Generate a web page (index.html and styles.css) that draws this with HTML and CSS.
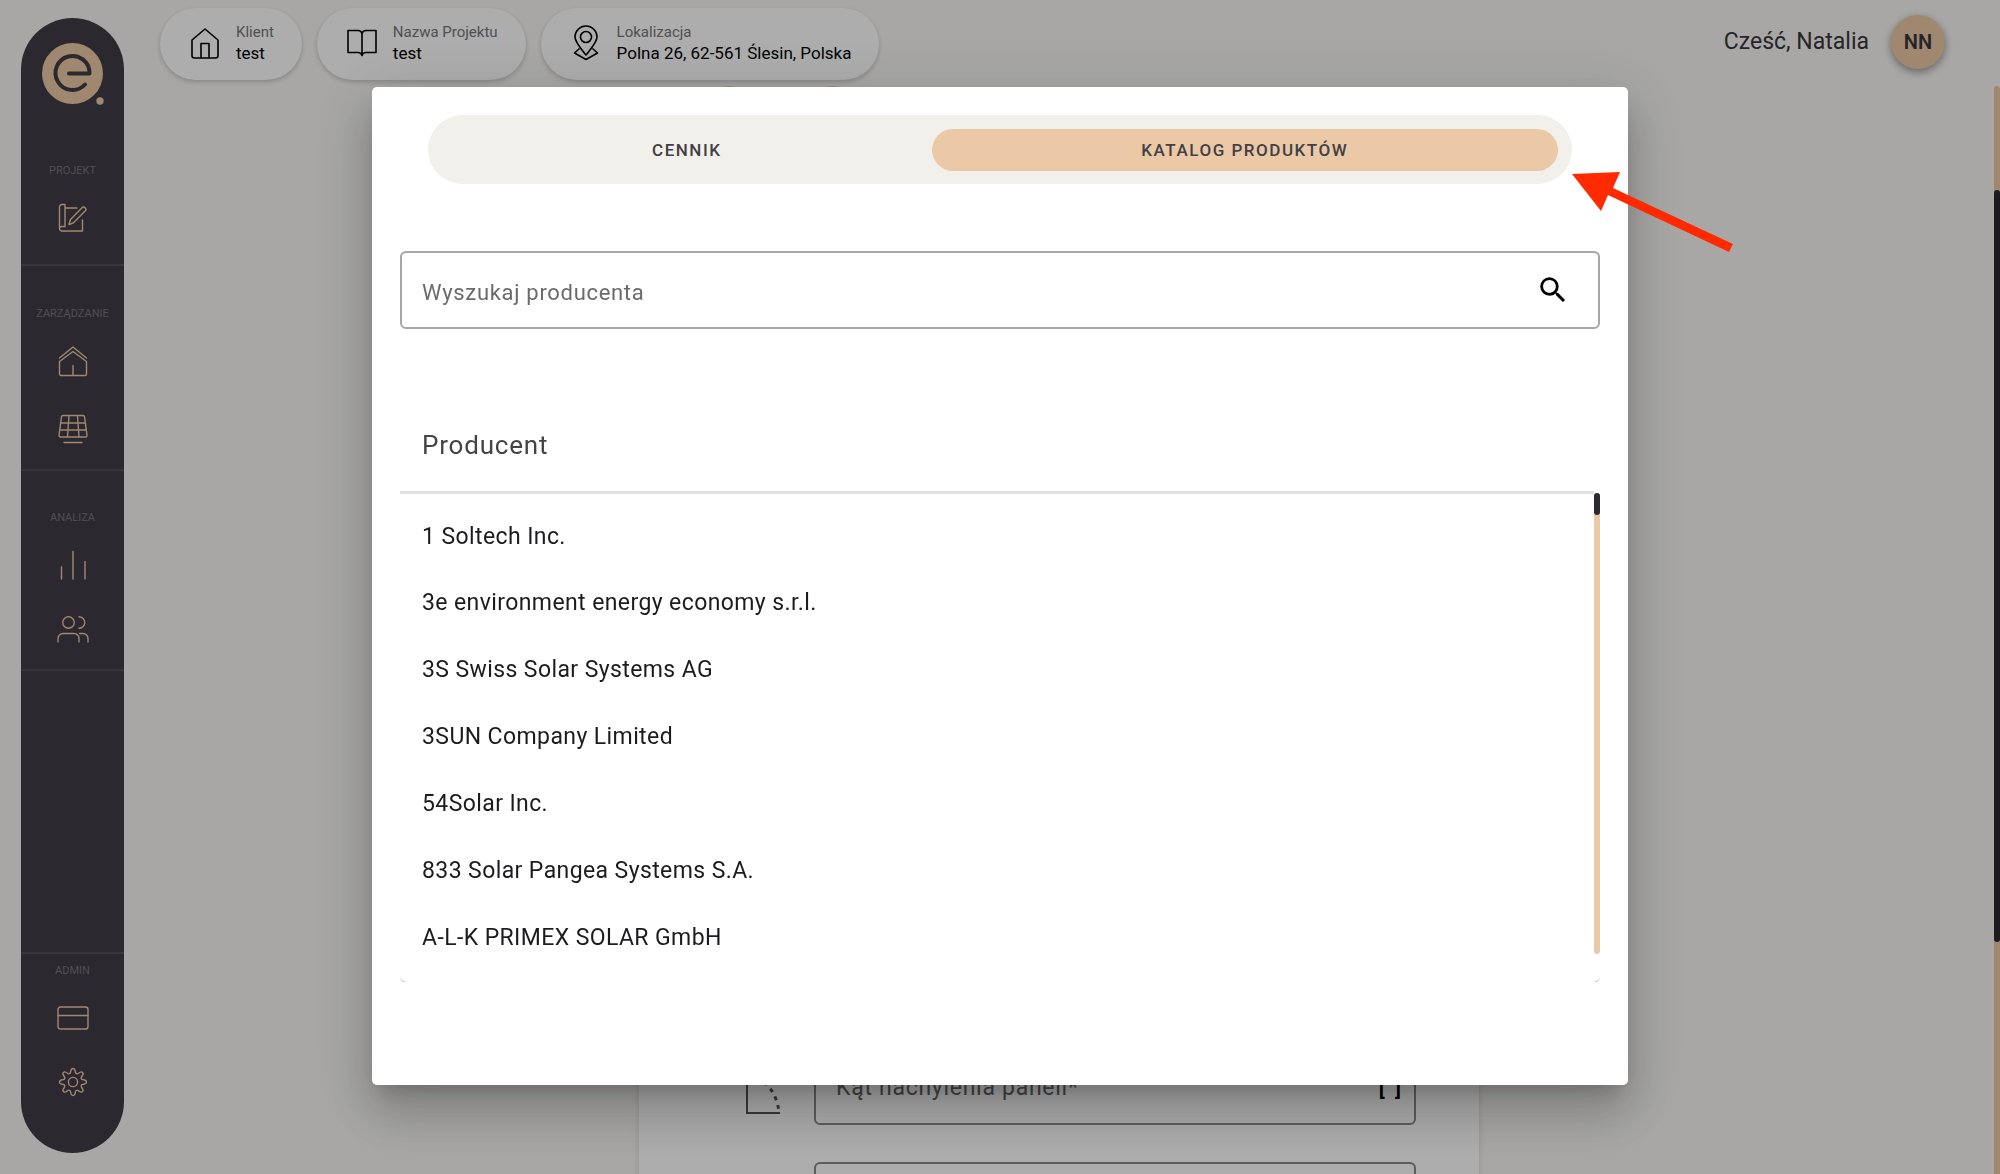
FILE: index.html
```html
<!DOCTYPE html>
<html lang="pl">
<head>
  <meta charset="utf-8">
  <meta name="viewport" content="width=device-width, initial-scale=1">
  <title>Katalog produktów</title>
  <link rel="stylesheet" href="styles.css">
</head>
<body>
  <div class="app">
    <nav class="sidebar" aria-label="Menu główne">
      <a class="logo" href="#" aria-label="Strona główna">
        <svg width="62" height="62" viewBox="0 0 62 62">
          <circle class="logo-fill" cx="30.500" cy="30.500" r="30.500"/>
          <circle class="logo-fill" cx="58" cy="58" r="3.700"/>
          <path class="logo-line" d="M27 30.500H47.500A17 17 0 1 0 43 41.500"/>
        </svg>
      </a>
      <section class="group group-first">
        <h2 class="group-label">PROJEKT</h2>
        <a class="nav-item" href="#" aria-label="Projekt">
          <svg width="30" height="30" viewBox="0 0 30 30"><path d="M7 2.500v21H3.500a2 2 0 0 0-2 2V4a2.500 2.500 0 0 1 2.500-2.500h3v2M7 5h12M24.500 17v11H4a2.500 2.500 0 0 1-2.500-2.500M11 21.500l1.500-5L24 4.800a2 2 0 0 1 3.300 3L15.500 19.800z"/></svg>
        </a>
      </section>
      <section class="group group-manage">
        <h2 class="group-label">ZARZĄDZANIE</h2>
        <a class="nav-item" href="#" aria-label="Domy">
          <svg width="30" height="32" viewBox="0 0 30 32"><path d="M1.500 13L15 2l13.500 11M1.500 16.500L15 6.500l13.500 10V29a1.500 1.500 0 0 1-1.500 1.500H3A1.500 1.500 0 0 1 1.500 29zM15 20.500v10"/></svg>
        </a>
        <a class="nav-item" href="#" aria-label="Panele">
          <svg width="30" height="30" viewBox="0 0 30 30"><path d="M5 1.500h20a1.500 1.500 0 0 1 1.500 1.200L29 21.500a1.500 1.500 0 0 1-1.500 1.500h-25A1.500 1.500 0 0 1 1 21.500L3.500 2.700A1.500 1.500 0 0 1 5 1.500zM2.500 9h25M1.800 16h26.500M11 1.500L9.500 23M19.500 1.500L21 23M6 28.500h18"/></svg>
        </a>
      </section>
      <section class="group group-analysis">
        <h2 class="group-label">ANALIZA</h2>
        <a class="nav-item" href="#" aria-label="Wykresy">
          <svg width="30" height="30" viewBox="0 0 30 30"><path d="M3.500 17v12M15 1.500V29M27 11.500V29"/></svg>
        </a>
        <a class="nav-item" href="#" aria-label="Użytkownicy">
          <svg width="32" height="28" viewBox="0 0 32 28"><circle cx="11.500" cy="7.500" r="5.800"/><path d="M22 1.700a5.800 5.800 0 0 1 0 11.600M1 27v-3.500a5 5 0 0 1 5-5h11a5 5 0 0 1 5 5V27M22.500 18.500H26a5 5 0 0 1 5 5V27"/></svg>
        </a>
      </section>
      <section class="group group-admin">
        <h2 class="group-label">ADMIN</h2>
        <a class="nav-item" href="#" aria-label="Płatności">
          <svg width="32" height="24" viewBox="0 0 32 24"><rect x="1" y="1" width="30" height="22" rx="2.500"/><path d="M1 9.500h30"/></svg>
        </a>
        <a class="nav-item" href="#" aria-label="Ustawienia">
          <svg width="30" height="30" viewBox="0 0 30 30"><circle cx="15" cy="15" r="4.600"/><path d="M12.500 5.500C12.800 3 13 1.500 15 1.500s2.200 1.500 2.500 4c.3 1.200 1.700 1.700 2.700 1 1.900-1.500 3-2.500 4.400-1.100s.4 2.500-1.100 4.400c-.7 1-.2 2.400 1 2.700 2.500.3 4 .5 4 2.500s-1.500 2.200-4 2.500c-1.200.3-1.700 1.700-1 2.700 1.500 1.900 2.500 3 1.100 4.400s-2.500.4-4.400-1.100c-1-.7-2.400-.2-2.700 1-.3 2.500-.5 4-2.500 4s-2.200-1.500-2.500-4c-.3-1.200-1.700-1.700-2.700-1-1.900 1.500-3 2.500-4.400 1.100s-.4-2.500 1.100-4.400c.7-1 .2-2.400-1-2.700-2.500-.3-4-.5-4-2.500s1.500-2.200 4-2.500c1.200-.3 1.700-1.700 1-2.700C5 7.900 4 6.800 5.400 5.400s2.500-.4 4.400 1.100c1 .7 2.400.2 2.700-1z"/></svg>
        </a>
      </section>
    </nav>

    <div class="page">
      <header class="topbar">
        <div class="chip">
          <svg class="chip-icon" width="30" height="34" viewBox="0 0 30 34"><path d="M2 14L15 3l13 11v15.500a2.500 2.500 0 0 1-2.500 2.500h-21A2.500 2.500 0 0 1 2 29.500zM11 32V17.500h8V32"/></svg>
          <div><div class="chip-label">Klient</div><div class="chip-value">test</div></div>
        </div>
        <div class="chip">
          <svg class="chip-icon" width="30" height="34" viewBox="0 0 30 34"><path d="M15 7.500C14.500 5.500 13 4.500 11 4.500H1v22h10c2 0 3.500 1 4 3 .5-2 2-3 4-3h10v-22H19c-2 0-3.500 1-4 3zV29"/></svg>
          <div><div class="chip-label">Nazwa Projektu</div><div class="chip-value">test</div></div>
        </div>
        <div class="chip">
          <svg class="chip-icon" width="30" height="36" viewBox="0 0 30 36"><path d="M15 30C9 22.500 4 17 4 12a11 11 0 0 1 22 0c0 5-5 10.500-11 18zM8.500 23.500L3.500 28 15 34.500 26.500 28l-5-4.500"/><circle cx="15" cy="12" r="5.500"/></svg>
          <div><div class="chip-label">Lokalizacja</div><div class="chip-value">Polna 26, 62-561 Ślesin, Polska</div></div>
        </div>
        <div class="user">
          <span>Cześć, Natalia</span>
          <button class="avatar" type="button">NN</button>
        </div>
      </header>
      <div class="scroller">
        <main class="content">
          <div class="steps"><span class="step"></span><span class="step"></span></div>
          <form class="card">
            <div class="field-row">
              <svg class="angle" width="34" height="76" viewBox="0 0 34 76"><path d="M1 0v66h33"/><path class="angle-arc" d="M1 30c17 0 30 14 32 36"/></svg>
              <div class="field">
                <label for="tilt">Kąt nachylenia paneli*</label>
                <input id="tilt" type="text">
                <span class="unit">[°]</span>
              </div>
            </div>
            <div class="field-row">
              <div class="field"><input type="text" aria-label="Azymut"></div>
            </div>
          </form>
        </main>
        <div class="page-track"><div class="page-thumb"></div></div>
      </div>
    </div>
  </div>

  <div class="backdrop">
    <div class="dialog" role="dialog" aria-modal="true" aria-label="Katalog produktów">
      <div class="tabs" role="tablist">
        <button class="tab" type="button" role="tab" aria-selected="false">CENNIK</button>
        <button class="tab tab-active" type="button" role="tab" aria-selected="true">KATALOG PRODUKTÓW</button>
      </div>
      <div class="search">
        <input type="text" placeholder="Wyszukaj producenta" aria-label="Wyszukaj producenta">
        <button class="search-button" type="button" aria-label="Szukaj">
          <svg width="34" height="34" viewBox="0 0 24 24"><path d="M15.500 14h-.79l-.28-.27A6.470 6.470 0 0 0 16 9.500 6.500 6.500 0 1 0 9.500 16c1.610 0 3.090-.59 4.230-1.570l.27.28v.79l5 4.990L20.490 19l-4.990-5zm-6 0C7.010 14 5 11.990 5 9.500S7.010 5 9.500 5 14 7.010 14 9.500 11.990 14 9.500 14z"/></svg>
        </button>
      </div>
      <div class="producers">
        <table class="table">
          <thead><tr><th scope="col">Producent</th></tr></thead>
          <tbody>
            <tr><td>1 Soltech Inc.</td></tr>
            <tr><td>3e environment energy economy s.r.l.</td></tr>
            <tr><td>3S Swiss Solar Systems AG</td></tr>
            <tr><td>3SUN Company Limited</td></tr>
            <tr><td>54Solar Inc.</td></tr>
            <tr><td>833 Solar Pangea Systems S.A.</td></tr>
            <tr><td>A-L-K PRIMEX SOLAR GmbH</td></tr>
          </tbody>
        </table>
        <div class="track"><div class="thumb"></div></div>
      </div>
      <svg class="arrow" width="162" height="82" viewBox="0 0 162 82"><path d="M1 2L49 0l-7 16 120 56-4 8L37 23l-7 16z"/></svg>
    </div>
  </div>
</body>
</html>
```
FILE: styles.css
```css
:root {
  --accent: #ebc8a6;
  --ink: #2d2930;
  --paper: #f8f7f4;
  --body-tracking: 0.03125em;
  --table-tracking: 0.025em;
  --button-tracking: 0.0892857em;
}

* { box-sizing: border-box; }

body {
  margin: 0;
  background: var(--paper);
  font-family: Roboto, "Liberation Sans", sans-serif;
  color: #1c1b1d;
  overflow: hidden;
}

button, input { font: inherit; color: inherit; }

.app {
  display: flex;
  height: 100vh;
}

/* Sidebar */
.sidebar {
  display: flex;
  flex-direction: column;
  flex: none;
  width: 103px;
  margin: 18px 0 21px 21px;
  padding: 25px 0 39px;
  border-radius: 52px;
  background: #423c47;
}

.logo { align-self: center; height: 62px; }
.logo svg { display: block; overflow: visible; }
.logo-fill { fill: var(--accent); }
.logo-line { fill: none; stroke: #423c47; stroke-width: 4; stroke-linecap: round; stroke-linejoin: round; }

.group {
  display: flex;
  flex-direction: column;
  align-items: center;
  padding: 40px 0 8px;
  border-bottom: 2px solid #524d56;
}
.group-label {
  margin: 0 0 8px;
  font-size: 11px;
  line-height: 14px;
  font-weight: 400;
  color: #77737b;
}
.group-first { padding: 59px 0 14px; }
.group-manage { padding-top: 41px; gap: 4px; }
.group-manage .group-label { margin-bottom: 4px; }
.group-admin {
  margin-top: auto;
  padding: 10px 0 0;
  border-top: 2px solid #524d56;
  border-bottom: 0;
}
.nav-item {
  display: flex;
  align-items: center;
  justify-content: center;
  width: 64px;
  height: 64px;
}
.nav-item svg {
  fill: none;
  stroke: var(--accent);
  stroke-width: 1.400;
  stroke-linecap: round;
  stroke-linejoin: round;
}

/* Top bar */
.page {
  display: flex;
  flex-direction: column;
  flex: 1;
  min-width: 0;
}
.topbar {
  display: flex;
  align-items: flex-start;
  gap: 15px;
  flex: none;
  height: 86px;
  padding: 8px 55px 0 36px;
}
.chip {
  display: flex;
  align-items: center;
  gap: 16px;
  height: 72px;
  padding: 0 28px 2px 30px;
  border-radius: 36px;
  background: #fff;
  box-shadow: 0 2px 5px rgba(0, 0, 0, 0.2);
}
.chip-icon { fill: none; stroke: #000; stroke-width: 1.600; stroke-linejoin: round; }
.chip-label { font-size: 15px; line-height: 21px; color: #77757a; }
.chip-value { font-size: 17px; line-height: 21px; color: #000; }
.user {
  display: flex;
  align-items: center;
  gap: 22px;
  height: 67px;
  margin-left: auto;
  font-size: 23px;
  color: #39353c;
}
.avatar {
  width: 54px;
  height: 54px;
  padding: 0;
  border: 0;
  border-radius: 50%;
  background: var(--accent);
  box-shadow: 0 3px 8px rgba(0, 0, 0, 0.4);
  font-size: 20px;
  font-weight: 600;
}

/* Page content behind the dialog */
.scroller {
  display: flex;
  flex: 1;
  min-height: 0;
}
.content {
  flex: 1;
  overflow: hidden;
}
.steps { display: flex; justify-content: center; gap: 24px; height: 80px; margin-right: 556px; }
.step { width: 80px; height: 80px; border-radius: 50%; background: var(--accent); }
.card {
  display: flex;
  flex-direction: column;
  gap: 37px;
  width: 840px;
  margin: 0 auto;
  padding: 881px 63px 40px 107px;
  background: #fff;
  box-shadow: 0 0 8px rgba(0, 0, 0, 0.12);
}
.field-row { display: flex; justify-content: flex-end; gap: 34px; }
.angle { fill: none; stroke: #555; stroke-width: 2; }
.angle-arc { stroke-dasharray: 4 5; stroke-width: 3; }
.field {
  display: flex;
  align-items: center;
  width: 602px;
  height: 78px;
  padding: 2px 12px 0 20px;
  border: 2px solid #8a8a8a;
  border-radius: 6px;
  font-size: 23px;
  letter-spacing: var(--body-tracking);
}
.field label { color: #666; }
.field input { flex: 1; min-width: 0; border: 0; background: none; }
.unit { color: #000; font-weight: 500; }
.page-track { flex: none; width: 6px; padding-top: 104px; border-radius: 3px 3px 0 0; background: var(--accent); }
.page-thumb { height: 76.4%; border-radius: 3px; background: var(--ink); }

/* Dialog */
.backdrop {
  position: fixed;
  inset: 0;
  display: flex;
  align-items: center;
  justify-content: center;
  padding-bottom: 2px;
  background: rgba(0, 0, 0, 0.32);
}
.dialog {
  position: relative;
  width: 62.8%;
  min-height: 85vh;
  padding: 28px;
  border-radius: 5px;
  background: #fff;
  box-shadow:
    0 14px 19px -9px rgba(0, 0, 0, 0.2),
    0 31px 48px 4px rgba(0, 0, 0, 0.14),
    0 11px 59px 10px rgba(0, 0, 0, 0.12);
}
.tabs {
  display: flex;
  align-items: center;
  height: 69px;
  margin: 0 28px;
  padding: 0 14px;
  border-radius: 35px;
  background: #f1f0eb;
}
.tab {
  flex: 490;
  height: 42px;
  padding: 0;
  border: 0;
  border-radius: 21px;
  background: none;
  font-size: 17px;
  font-weight: 500;
  letter-spacing: var(--button-tracking);
  color: #423f46;
}
.tab-active { flex: 627; background: var(--accent); }
.search {
  display: flex;
  align-items: center;
  height: 78px;
  margin-top: 67px;
  padding: 0 28px 0 20px;
  border: 2px solid #a6a6a6;
  border-radius: 6px;
}
.search input {
  flex: 1;
  min-width: 0;
  padding: 4px 0 0;
  border: 0;
  outline: 0;
  font-size: 22px;
  letter-spacing: var(--body-tracking);
}
.search input::placeholder { color: #6b6b6b; opacity: 1; }
.search-button { height: 34px; padding: 0; border: 0; background: none; }
.producers {
  position: relative;
  display: flex;
  margin-top: 70px;
  padding-bottom: 11px;
}
.producers::before,
.producers::after {
  content: "";
  position: absolute;
  bottom: 0;
  width: 5px;
  height: 5px;
  border-bottom: 1px solid #bbb;
}
.producers::before { left: 0; border-bottom-left-radius: 5px; }
.producers::after { right: 0; border-bottom-right-radius: 5px; }
.table { flex: 1; border-collapse: collapse; letter-spacing: var(--table-tracking); }
.table th {
  height: 93px;
  padding: 0 22px;
  border-bottom: 3px solid #e2e2e2;
  font-size: 26px;
  font-weight: 400;
  letter-spacing: var(--body-tracking);
  text-align: left;
  color: #444;
}
.table td { height: 67px; padding: 0 22px; font-size: 23px; }
.table tbody tr:first-child td { height: 77px; padding-top: 10px; }
.track { width: 6px; margin: 94px 0 17px; border-radius: 3px; background: var(--accent); }
.thumb { height: 22px; border-radius: 3px; background: var(--ink); }
.arrow { position: absolute; top: 85px; right: -105px; fill: #ff2a00; }
```
